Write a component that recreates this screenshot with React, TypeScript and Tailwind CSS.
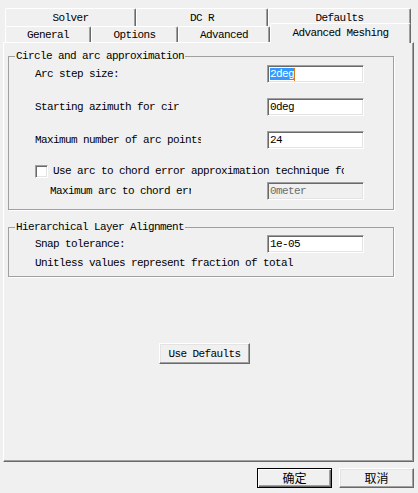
import React from 'react';

const raised =
  'border border-t-white border-l-white border-r-[#696969] border-b-[#696969] shadow-[inset_-1px_-1px_0_#a0a0a0,inset_1px_1px_0_#e3e3e3]';
const sunken =
  'border border-t-[#a0a0a0] border-l-[#a0a0a0] border-r-white border-b-white shadow-[inset_1px_1px_0_#696969,inset_-1px_-1px_0_#e3e3e3]';
const tab =
  'flex items-center justify-center border-t border-l border-r border-t-white border-l-white border-r-[#696969] rounded-t-[2px] shadow-[inset_-1px_0_0_#a0a0a0] bg-[#f0f0f0]';

function Field({ value, disabled, selected }: { value: string; disabled?: boolean; selected?: boolean }) {
  return (
    <div
      className={`w-[97px] h-[18px] flex items-center pl-[2px] ${sunken} ${
        disabled ? 'bg-[#f0f0f0] text-[#6d6d6d]' : 'bg-white'
      }`}
    >
      {selected ? (
        <>
          <span className="bg-[#3399ff] text-white">{value}</span>
          <span className="w-px h-[13px] bg-[#e0781e]" />
        </>
      ) : (
        <span>{value}</span>
      )}
    </div>
  );
}

// label column is 232px wide; some labels are cut short like the original dialog
function Row({ label, clip, indent, children, className }: { label: string; clip?: number; indent?: boolean; children?: React.ReactNode; className?: string }) {
  return (
    <div className={`flex items-center h-[18px] ${className ?? ''}`}>
      <div className={`w-[232px] ${indent ? 'pl-[15px]' : ''}`}>
        <span className="block overflow-hidden whitespace-nowrap" style={clip ? { width: clip } : undefined}>
          {label}
        </span>
      </div>
      {children}
    </div>
  );
}

export default function App() {
  return (
    <div className="w-[418px] h-[493px] bg-[#f0f0f0] pt-[8px] flex flex-col text-black font-['Liberation_Mono',monospace] text-[11px] tracking-[-0.6px] leading-[12px]">
      {/* tab rows */}
      <div className="flex ml-[5px] h-[18px]">
        <div className={`${tab} w-[131px]`}>Solver</div>
        <div className={`${tab} w-[132px]`}>DC R</div>
        <div className={`${tab} w-[143px]`}>Defaults</div>
      </div>
      <div className="flex ml-[5px] h-[16px] items-end relative z-10">
        <div className={`${tab} w-[86px] h-[16px]`}>General</div>
        <div className={`${tab} w-[87px] h-[16px]`}>Options</div>
        <div className={`${tab} w-[92px] h-[16px]`}>Advanced</div>
        <div className={`${tab} w-[141px] h-[20px] -mb-px pb-[2px]`}>Advanced Meshing</div>
      </div>

      {/* page */}
      <div className="ml-[3px] w-[411px] h-[420px] pt-[7px] pl-[4px] flex flex-col items-start border border-t-white border-l-white border-r-[#696969] border-b-[#696969] shadow-[inset_-1px_-1px_0_#a0a0a0]">
        <fieldset className="w-[386px] border border-[#a0a0a0] shadow-[1px_1px_0_#fff]">
          <legend className="ml-[6px] px-[1px] leading-[12px]">Circle and arc approximation</legend>
          <div className="flex flex-col pl-[26px] pb-[9px]">
            <Row label="Arc step size:" className="mt-[3px]">
              <Field value="2deg" selected />
            </Row>
            <Row label="Starting azimuth for cir" className="mt-[15px]">
              <Field value="0deg" />
            </Row>
            <Row label="Maximum number of arc points" clip={166} className="mt-[15px]">
              <Field value="24" />
            </Row>
            <div className="flex items-center h-[18px] mt-[13px]">
              <div className={`w-[13px] h-[13px] bg-white ${sunken}`} />
              <span className="ml-[5px] w-[291px] block overflow-hidden whitespace-nowrap">
                Use arc to chord error approximation technique for arcs
              </span>
            </div>
            <Row label="Maximum arc to chord error" clip={141} indent className="mt-[2px]">
              <Field value="0meter" disabled />
            </Row>
          </div>
        </fieldset>

        <fieldset className="w-[386px] mt-[11px] border border-[#a0a0a0] shadow-[1px_1px_0_#fff]">
          <legend className="ml-[6px] px-[1px] leading-[12px]">Hierarchical Layer Alignment</legend>
          <div className="flex flex-col pl-[26px] pb-[4px]">
            <Row label="Snap tolerance:" className="mt-[2px]">
              <Field value="1e-05" />
            </Row>
            <div className="flex items-center h-[18px] mt-[1px]">Unitless values represent fraction of total</div>
          </div>
        </fieldset>

        <button className={`mt-[66px] ml-[151px] w-[91px] h-[21px] flex items-center justify-center bg-[#f0f0f0] ${raised}`}>
          Use Defaults
        </button>
      </div>

      {/* dialog buttons */}
      <div className="flex justify-end gap-[7px] pr-[4px] mt-[6px] font-['Noto_Sans_CJK_SC',sans-serif] text-[12px] tracking-normal">
        <button className="w-[75px] h-[20px] flex items-center justify-center bg-[#f0f0f0] border border-black shadow-[inset_1px_1px_0_#fff,inset_-1px_-1px_0_#696969,inset_-2px_-2px_0_#a0a0a0]">
          确定
        </button>
        <button className={`w-[75px] h-[20px] flex items-center justify-center bg-[#f0f0f0] ${raised}`}>取消</button>
      </div>
    </div>
  );
}
